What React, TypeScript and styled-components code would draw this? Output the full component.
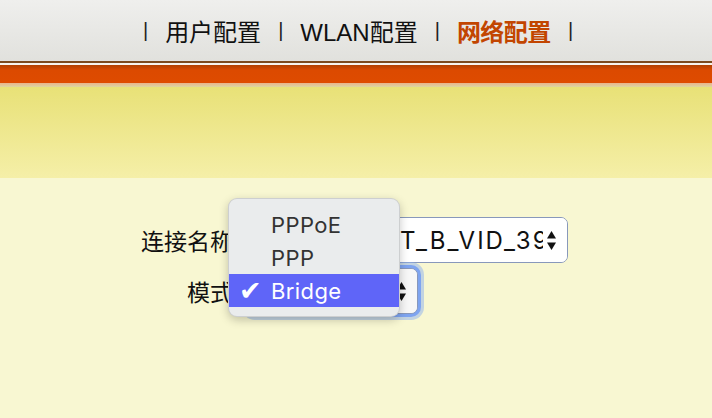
import React from 'react';
import styled, { createGlobalStyle } from 'styled-components';

const GlobalStyle = createGlobalStyle`
  html, body {
    margin: 0;
    padding: 0;
    background: #f8f7d2;
  }
  body {
    font-family: "Liberation Sans", "Noto Sans CJK SC", sans-serif;
    width: 712px;
    height: 418px;
    overflow: hidden;
  }
`;

const Page = styled.div`
  display: flex;
  flex-direction: column;
  height: 418px;
`;

// top navigation
const NavBar = styled.nav`
  height: 61px;
  display: flex;
  align-items: center;
  justify-content: center;
  gap: 17px;
  padding-left: 4px;
  background: linear-gradient(#efefed, #e1e1dd);
  font-size: 24px;
  color: #111;
`;

const Divider = styled.span`
  font-size: 20px;
  color: #222;
  margin-top: -1px;
`;

const NavLink = styled.a<{ $active?: boolean }>`
  text-decoration: none;
  color: ${(p) => (p.$active ? '#c24500' : '#111')};
  font-weight: ${(p) => (p.$active ? 700 : 400)};
  letter-spacing: ${(p) => (p.$active ? '-0.5px' : '0')};
`;

const Stripe = styled.div<{ $h: number; $bg: string }>`
  height: ${(p) => p.$h}px;
  background: ${(p) => p.$bg};
`;

const Content = styled.main`
  flex: 1;
  position: relative;
  padding-top: 39px;
  background: #f8f7d2;
`;

const Form = styled.div`
  display: grid;
  grid-template-columns: 233px auto;
  column-gap: 15px;
  row-gap: 5px;
  align-items: center;
  justify-content: start;
`;

const Label = styled.label`
  text-align: right;
  font-size: 23px;
  color: #111;
  font-family: "Noto Sans CJK SC", sans-serif;
`;

const SelectWrap = styled.div<{ $width: number }>`
  position: relative;
  width: ${(p) => p.$width}px;
`;

const NativeSelect = styled.select<{ $focused?: boolean; $indent?: number }>`
  appearance: none;
  -webkit-appearance: none;
  width: 100%;
  height: 46px;
  box-sizing: border-box;
  padding: 0 24px 0 ${(p) => p.$indent ?? 10}px;
  font-family: Inter, "Liberation Sans", sans-serif;
  font-size: 24px;
  letter-spacing: 2px;
  color: #111;
  background: ${(p) => (p.$focused ? '#f7f7f7' : '#fff')};
  border: 1px solid #8898bb;
  border-radius: 7px;
  outline: none;
  box-shadow: ${(p) =>
    p.$focused
      ? '0 0 0 3px #7ea4f0, 0 0 0 6px rgba(140, 175, 240, 0.5)'
      : 'none'};
`;

// arrow cap at the right end of a select, hides the overflowing text
const ArrowCap = styled.span<{ $focused?: boolean }>`
  position: absolute;
  top: 1px;
  right: 1px;
  bottom: 1px;
  width: 22px;
  display: flex;
  align-items: center;
  padding-left: 2px;
  box-sizing: border-box;
  background: ${(p) => (p.$focused ? '#f7f7f7' : '#fff')};
  border-radius: 0 6px 6px 0;
  pointer-events: none;
`;

// open option list that lies over the form
const Menu = styled.div`
  position: absolute;
  left: 228px;
  top: 20px;
  width: 172px;
  padding: 9px 0;
  box-sizing: border-box;
  background: #eaeced;
  border-radius: 9px;
  border: 1px solid rgba(0, 0, 0, 0.12);
  box-shadow: 0 3px 10px rgba(0, 0, 0, 0.22);
`;

const MenuItem = styled.div<{ $selected?: boolean }>`
  height: 33px;
  display: flex;
  align-items: center;
  font-size: 22px;
  letter-spacing: 0.4px;
  font-family: Inter, "Liberation Sans", sans-serif;
  color: ${(p) => (p.$selected ? '#fff' : '#333')};
  background: ${(p) => (p.$selected ? '#5f65f8' : 'transparent')};
`;

const Check = styled.span`
  width: 42px;
  padding-left: 10px;
  box-sizing: border-box;
  font-size: 27px;
  line-height: 1;
  font-family: "DejaVu Sans", sans-serif;
`;

function UpDown({ focused }: { focused?: boolean }) {
  return (
    <ArrowCap $focused={focused}>
      <svg width="9" height="19" viewBox="0 0 9 19">
        <path d="M4.5 0 L9 7.5 L0 7.5 Z" fill="#111" />
        <path d="M4.5 19 L9 11.5 L0 11.5 Z" fill="#111" />
      </svg>
    </ArrowCap>
  );
}

export default function App() {
  return (
    <Page>
      <GlobalStyle />
      <NavBar>
        <Divider>|</Divider>
        <NavLink href="#">用户配置</NavLink>
        <Divider>|</Divider>
        <NavLink href="#">WLAN配置</NavLink>
        <Divider>|</Divider>
        <NavLink href="#" $active>
          网络配置
        </NavLink>
        <Divider>|</Divider>
      </NavBar>
      <Stripe $h={2} $bg="#7b4a1e" />
      <Stripe $h={2} $bg="#f6f4ee" />
      <Stripe $h={18} $bg="linear-gradient(#b04000, #dc4a00 30%, #de4b00)" />
      <Stripe $h={4} $bg="linear-gradient(#e9b48c, #ddd6a0)" />
      <Stripe $h={91} $bg="linear-gradient(#e8e177, #f5efa8)" />
      <Content>
        <Form>
          <Label>连接名称</Label>
          <SelectWrap $width={320}>
            <NativeSelect $indent={4} defaultValue="3_INTERNET_B_VID_39">
              <option>3_INTERNET_B_VID_39</option>
            </NativeSelect>
            <UpDown />
          </SelectWrap>
          <Label>模式</Label>
          <SelectWrap $width={170}>
            <NativeSelect $focused defaultValue="Bridge">
              <option>PPPoE</option>
              <option>PPP</option>
              <option>Bridge</option>
            </NativeSelect>
            <UpDown focused />
          </SelectWrap>
        </Form>
        <Menu>
          <MenuItem>
            <Check />
            PPPoE
          </MenuItem>
          <MenuItem>
            <Check />
            PPP
          </MenuItem>
          <MenuItem $selected>
            <Check>✔</Check>
            Bridge
          </MenuItem>
        </Menu>
      </Content>
    </Page>
  );
}
